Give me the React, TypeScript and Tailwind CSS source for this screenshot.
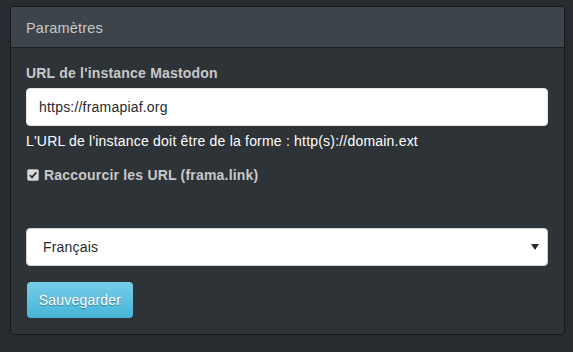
import React from "react";

export default function App() {
  return (
    <div
      className="w-[573px] h-[352px] bg-[#272b30] pt-[6px] px-[9px] text-[14px] leading-[20px] tracking-[0.2px] text-[#c8c8c8]"
      style={{ fontFamily: '"Liberation Sans", Arial, Helvetica, sans-serif' }}
    >
      <div className="ml-[1px] w-[555px] rounded-[4px] border border-[#16181b] bg-[#2e3338]">
        <div className="h-[41px] rounded-t-[3px] border-b border-[#1c1e22] bg-[#3e444c] px-[15px] pt-[11px]">
          <h3 className="text-[14.5px] leading-[20px] text-[#c8c8c8]">Paramètres</h3>
        </div>
        <div className="px-[15px] pt-[15px] pb-[16px]">
          <label className="block font-bold leading-[20px] mb-[5px]">URL de l'instance Mastodon</label>
          <div className="h-[38px] w-[522px] rounded-[4px] bg-white px-[12px] flex items-center text-[#272b30] border border-[#e6e6e6]">
            https://framapiaf.org
          </div>
          <p className="mt-[5px] mb-[10px] text-white">
            L'URL de l'instance doit être de la forme : http(s)://domain.ext
          </p>
          <div className="flex items-center h-[20px] mt-[14px]">
            <span className="ml-[1px] w-[12px] h-[12px] rounded-[2px] bg-[#d9d9d9] border border-[#a8a8a8] flex items-center justify-center">
              <svg width="10" height="10" viewBox="0 0 10 10">
                <path d="M1.8 5.2 L4 7.4 L8.3 2.3" stroke="#333" strokeWidth="1.8" fill="none" />
              </svg>
            </span>
            <span className="ml-[5px] font-bold">Raccourcir les URL (frama.link)</span>
          </div>
          <div className="mt-[43px] h-[38px] w-[522px] rounded-[4px] bg-white border border-[#d0d0d0] pl-[16px] pr-[8px] flex items-center justify-between text-[#272b30]">
            <span>Français</span>
            <svg width="8" height="6" viewBox="0 0 8 6">
              <path d="M0 0 H8 L4 6 Z" fill="#272b30" />
            </svg>
          </div>
          <div className="mt-[16px]">
            <button className="ml-[1px] h-[36px] w-[106px] rounded-[4px] bg-gradient-to-b from-[#75cde7] to-[#45b4d9] text-white text-[14px] tracking-[0.2px] [text-shadow:0_1px_1px_rgba(0,0,0,0.35)]">
              Sauvegarder
            </button>
          </div>
        </div>
      </div>
    </div>
  );
}
